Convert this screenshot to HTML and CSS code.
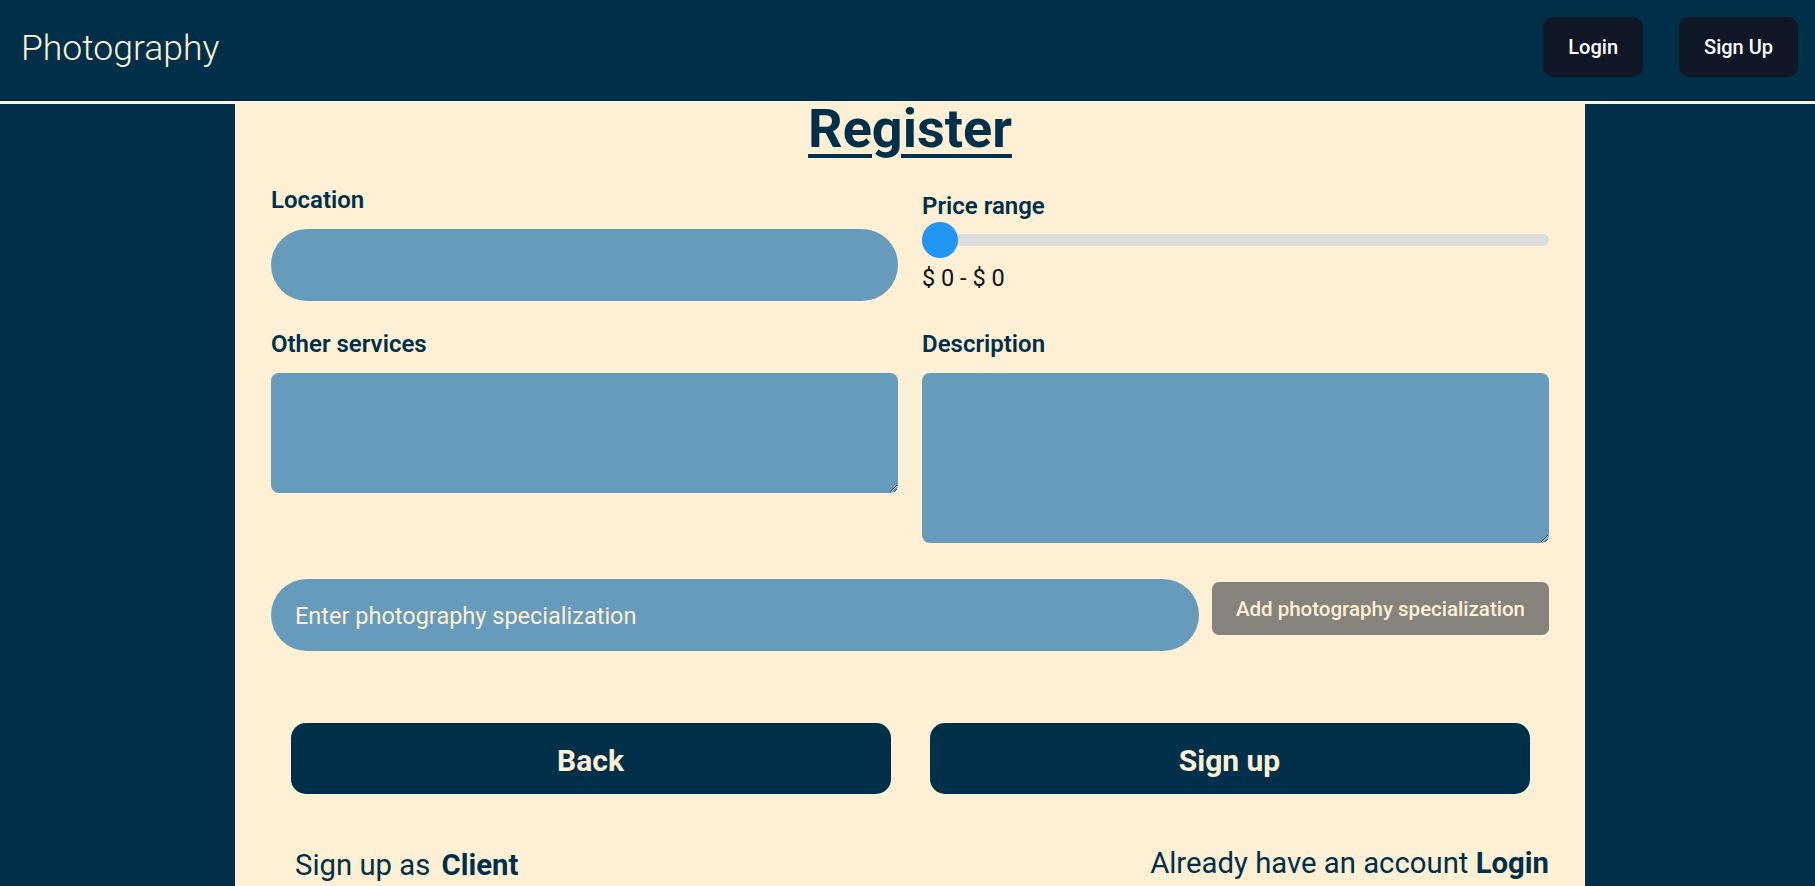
FILE: index.html
```html
<!DOCTYPE html>
<html lang="en">
<head>
<meta charset="utf-8">
<title>Photography - Register</title>
<link rel="stylesheet" href="styles.css">
</head>
<body>
<header class="navbar">
  <a class="brand" href="#">Photography</a>
  <div class="nav-actions">
    <button class="nav-btn" type="button">Login</button>
    <button class="nav-btn" type="button">Sign Up</button>
  </div>
</header>
<main class="page">
  <section class="card">
    <h1 class="title">Register</h1>
    <form class="form">
      <div class="grid">
        <div class="field">
          <label class="label">Location</label>
          <input class="pill-input" type="text">
        </div>
        <div class="field field-price">
          <label class="label">Price range</label>
          <input class="range" type="range" min="0" max="1000" value="0">
          <span class="price">$ 0 - $ 0</span>
        </div>
        <div class="field">
          <label class="label">Other services</label>
          <textarea class="area area-short"></textarea>
        </div>
        <div class="field">
          <label class="label">Description</label>
          <textarea class="area area-tall"></textarea>
        </div>
      </div>
      <div class="spec-row">
        <input class="pill-input spec-input" type="text" placeholder="Enter photography specialization">
        <button class="spec-btn" type="button">Add photography specialization</button>
      </div>
      <div class="actions">
        <button class="action-btn" type="button">Back</button>
        <button class="action-btn" type="button">Sign up</button>
      </div>
      <div class="footer-row">
        <p class="switch">Sign up as <strong class="strong-gap">Client</strong></p>
        <p class="login-link">Already have an account <strong>Login</strong></p>
      </div>
    </form>
  </section>
</main>
</body>
</html>
```
FILE: styles.css
```css
* { box-sizing: border-box; }

html, body {
  margin: 0;
  padding: 0;
}

body {
  background: #003049;
  font-family: Roboto, "Liberation Sans", sans-serif;
  color: #003049;
  min-height: 100vh;
  display: flex;
  flex-direction: column;
  overflow: hidden;
}

.navbar {
  height: 104px;
  flex: none;
  display: flex;
  justify-content: space-between;
  align-items: flex-start;
  padding: 17px 17px 0 20px;
  background: #003049;
  border-bottom: 3px solid #fdf0d5;
}

.brand {
  font-size: 35.5px;
  font-weight: 300;
  line-height: 62px;
  padding-left: 1px;
  color: #fdf0d5;
  text-decoration: none;
}

.nav-actions {
  display: flex;
  gap: 36px;
}

.nav-btn {
  height: 60px;
  padding: 0 25px;
  border: none;
  border-radius: 10px;
  background: #101828;
  color: #ffffff;
  font-family: Roboto, sans-serif;
  font-size: 20px;
  font-weight: 500;
}

.page {
  flex: 1;
  display: flex;
  flex-direction: column;
}

.card {
  flex: 1;
  margin: 0 230px 0 235px;
  padding: 0 36px;
  background: #fdf0d5;
}

.title {
  margin: 0;
  padding-top: 3px;
  font-size: 54px;
  font-weight: 700;
  line-height: 44px;
  text-align: center;
  text-decoration: underline;
  text-decoration-thickness: 4px;
  text-underline-offset: 7px;
  color: #003049;
}

.form {
  display: flex;
  flex-direction: column;
}

.grid {
  margin-top: 35px;
  display: grid;
  grid-template-columns: 1fr 1fr;
  column-gap: 24px;
  row-gap: 29px;
}

.field {
  display: flex;
  flex-direction: column;
}

.field-price {
  padding-top: 6px;
}

.label {
  font-size: 24px;
  line-height: 28px;
  font-weight: 600;
  color: #003049;
}

.pill-input {
  height: 72px;
  margin-top: 15px;
  padding: 2px 24px 0;
  border: none;
  border-radius: 36px;
  background: #669bbc;
  color: #fdf0d5;
  font-family: Roboto, sans-serif;
  font-size: 23.5px;
  outline: none;
}

.pill-input::placeholder {
  color: #fdf0d5;
  opacity: 1;
}

.range {
  -webkit-appearance: none;
  appearance: none;
  width: 100%;
  height: 36px;
  margin: 2px 0 0;
  background: transparent;
}

.range::-webkit-slider-runnable-track {
  height: 12px;
  border-radius: 6px;
  background: #dddddd;
}

.range::-webkit-slider-thumb {
  -webkit-appearance: none;
  appearance: none;
  width: 36px;
  height: 36px;
  margin-top: -12px;
  border: none;
  border-radius: 50%;
  background: #2196f3;
}

.price {
  margin-top: 7px;
  font-size: 23.5px;
  line-height: 27px;
  color: #111111;
}

.area {
  display: block;
  width: 100%;
  margin-top: 15px;
  padding: 10px 14px;
  border: none;
  border-radius: 8px;
  background: #669bbc;
  color: #fdf0d5;
  font-family: Roboto, sans-serif;
  font-size: 20px;
  outline: none;
}

.area-short { height: 120px; }
.area-tall { height: 170px; }

.spec-row {
  margin-top: 36px;
  display: flex;
  align-items: flex-start;
  gap: 13px;
}

.spec-input {
  flex: 1;
  min-width: 0;
  margin-top: 0;
}

.spec-btn {
  flex: none;
  height: 53px;
  margin-top: 3px;
  padding: 0 24px;
  border: none;
  border-radius: 7px;
  background: #86837d;
  color: #fdf0d5;
  font-family: Roboto, sans-serif;
  font-size: 20.5px;
  font-weight: 500;
}

.actions {
  margin-top: 72px;
  display: flex;
  justify-content: space-around;
}

.action-btn {
  width: 600px;
  height: 71px;
  padding-top: 4px;
  border: none;
  border-radius: 15px;
  background: #003049;
  color: #fdf0d5;
  font-family: Roboto, sans-serif;
  font-size: 30px;
  font-weight: 700;
}

.footer-row {
  margin-top: 52px;
  display: flex;
  justify-content: space-between;
  align-items: flex-start;
}

.switch,
.login-link {
  margin: 0;
  font-size: 29.3px;
  line-height: 34px;
  color: #003049;
}

.switch {
  margin-left: 24px;
  margin-top: 2px;
}

.strong-gap {
  margin-left: 4px;
}
```
